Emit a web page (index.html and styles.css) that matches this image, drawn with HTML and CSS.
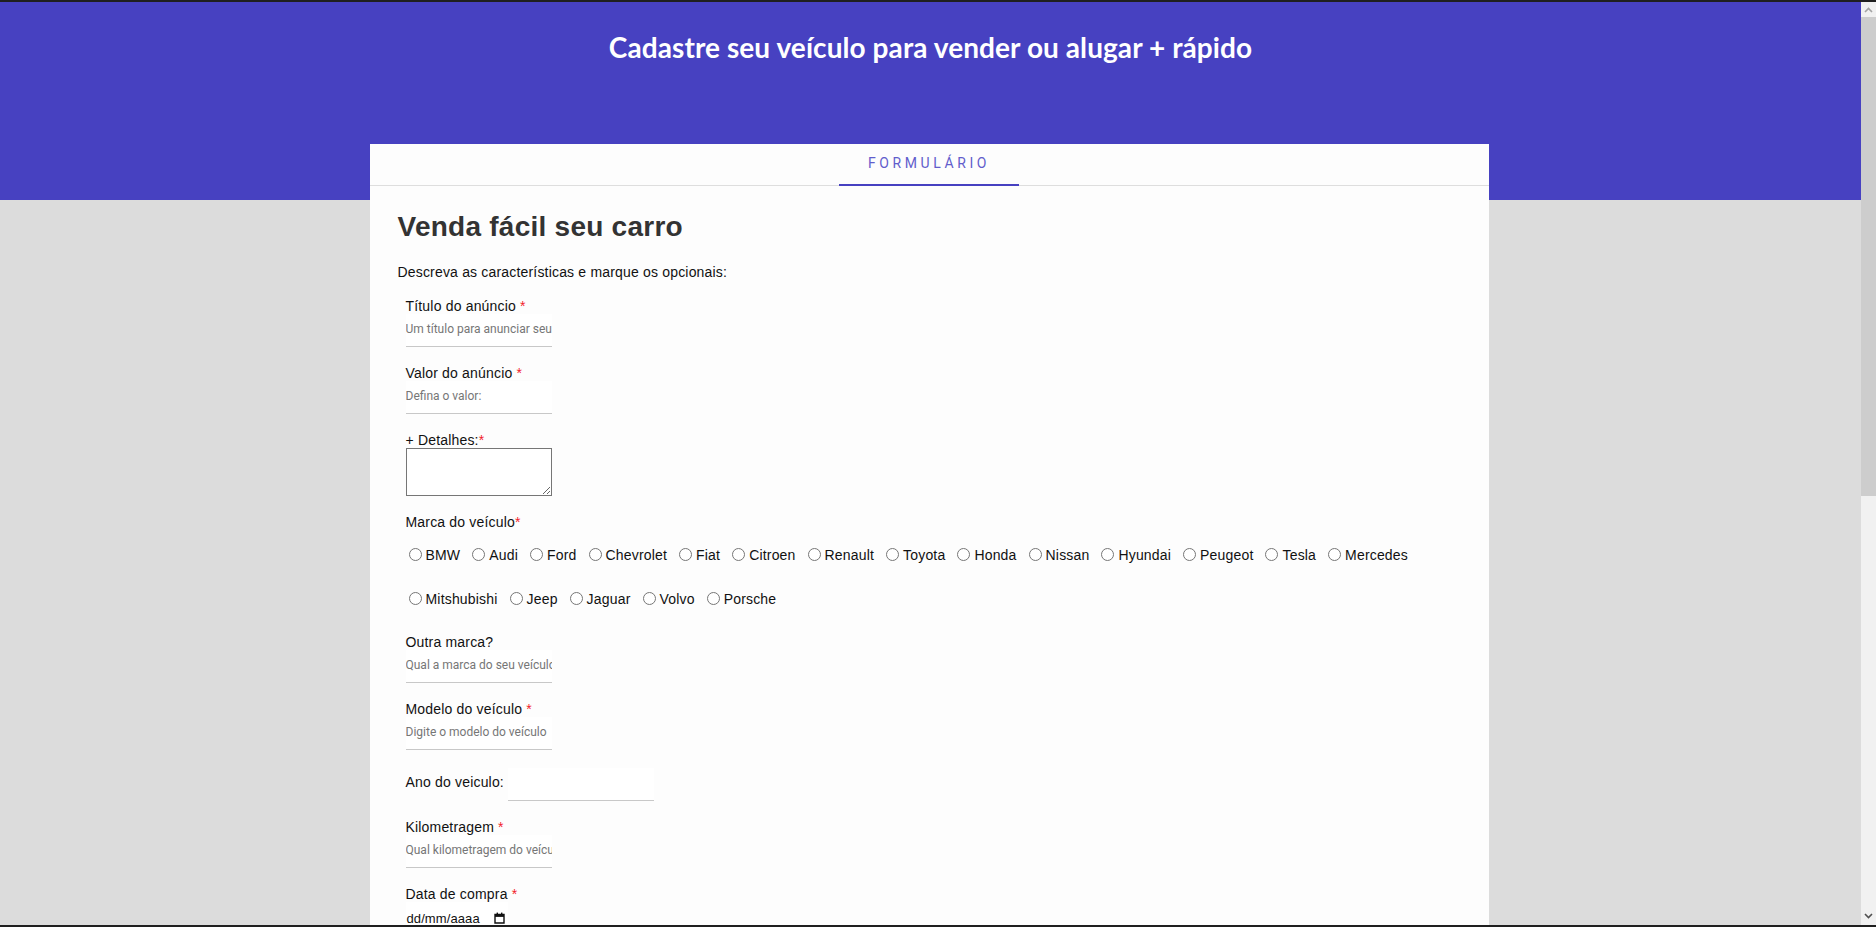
FILE: index.html
```html
<!DOCTYPE html>
<html lang="pt-BR">
<head>
<meta charset="utf-8">
<title>Cadastre seu veículo</title>
<link rel="stylesheet" href="styles.css">
</head>
<body>
<div class="frame-top"></div>
<div class="frame-bottom"></div>
<div class="scrollbar">
  <div class="sb-btn"><svg width="9" height="6" viewBox="0 0 9 6"><path d="M1 5 L4.5 1.5 L8 5" fill="none" stroke="#a3a3a3" stroke-width="1.6"/></svg></div>
  <div class="sb-thumb"></div>
  <div class="sb-track"></div>
  <div class="sb-btn sb-down"><svg width="9" height="6" viewBox="0 0 9 6"><path d="M1 1 L4.5 4.5 L8 1" fill="none" stroke="#505050" stroke-width="1.6"/></svg></div>
</div>

<div class="page">
  <header class="hero">
    <h1 class="hero-title">Cadastre seu veículo para vender ou alugar + rápido</h1>
  </header>

  <main class="card">
    <nav class="tabs"><a class="tab" href="#form">FORMULÁRIO</a></nav>

    <section class="content" id="form">
      <h2 class="form-title">Venda fácil seu carro</h2>
      <p class="intro">Descreva as características e marque os opcionais:</p>

      <form class="fields">
        <div class="field">
          <label class="label">Título do anúncio <span class="req">*</span></label>
          <input class="input" type="text" placeholder="Um título para anunciar seu veículo">
        </div>

        <div class="field">
          <label class="label">Valor do anúncio <span class="req">*</span></label>
          <input class="input" type="text" placeholder="Defina o valor:">
        </div>

        <div class="field">
          <label class="label">+ Detalhes:<span class="req">*</span></label>
          <textarea class="textarea"></textarea>
        </div>

        <div class="field field-wide">
          <label class="label">Marca do veículo<span class="req">*</span></label>
          <div class="radios">
            <label class="opt"><input type="radio" name="marca">BMW</label>
            <label class="opt"><input type="radio" name="marca">Audi</label>
            <label class="opt"><input type="radio" name="marca">Ford</label>
            <label class="opt"><input type="radio" name="marca">Chevrolet</label>
            <label class="opt"><input type="radio" name="marca">Fiat</label>
            <label class="opt"><input type="radio" name="marca">Citroen</label>
            <label class="opt"><input type="radio" name="marca">Renault</label>
            <label class="opt"><input type="radio" name="marca">Toyota</label>
            <label class="opt"><input type="radio" name="marca">Honda</label>
            <label class="opt"><input type="radio" name="marca">Nissan</label>
            <label class="opt"><input type="radio" name="marca">Hyundai</label>
            <label class="opt"><input type="radio" name="marca">Peugeot</label>
            <label class="opt"><input type="radio" name="marca">Tesla</label>
            <label class="opt"><input type="radio" name="marca">Mercedes</label>
            <label class="opt"><input type="radio" name="marca">Mitshubishi</label>
            <label class="opt"><input type="radio" name="marca">Jeep</label>
            <label class="opt"><input type="radio" name="marca">Jaguar</label>
            <label class="opt"><input type="radio" name="marca">Volvo</label>
            <label class="opt"><input type="radio" name="marca">Porsche</label>
          </div>
        </div>

        <div class="field">
          <label class="label">Outra marca?</label>
          <input class="input" type="text" placeholder="Qual a marca do seu veículo?">
        </div>

        <div class="field">
          <label class="label">Modelo do veículo <span class="req">*</span></label>
          <input class="input" type="text" placeholder="Digite o modelo do veículo">
        </div>

        <div class="field-inline">
          <label class="label">Ano do veiculo:</label>
          <input class="input" type="text">
        </div>

        <div class="field">
          <label class="label">Kilometragem <span class="req">*</span></label>
          <input class="input" type="text" placeholder="Qual kilometragem do veículo?">
        </div>

        <div class="field">
          <label class="label">Data de compra <span class="req">*</span></label>
          <div class="date">
            <span>dd/mm/aaaa</span>
            <svg class="cal" width="11" height="12" viewBox="0 0 11 12"><path d="M1 2.5 H10 V11 H1 Z" fill="none" stroke="#111" stroke-width="1.4"/><rect x="1" y="2.5" width="9" height="2.4" fill="#111"/><rect x="2.6" y="0.6" width="1.4" height="2.2" fill="#111"/><rect x="7" y="0.6" width="1.4" height="2.2" fill="#111"/></svg>
          </div>
        </div>

        <div class="field">
          <label class="label">Combustível <span class="req">*</span></label>
          <input class="input" type="text" placeholder="Gasolina, álcool, flex...">
        </div>

        <div class="field">
          <label class="label">Contato <span class="req">*</span></label>
          <input class="input" type="text" placeholder="Seu telefone">
        </div>
      </form>
    </section>
  </main>
</div>
</body>
</html>
```

FILE: styles.css
```css
html, body {
  margin: 0;
  padding: 0;
  overflow: hidden;
  background: #dcdcdc;
  font-family: "Liberation Sans", Arial, sans-serif;
  font-size: 14px;
  letter-spacing: 0.18px;
  color: #000;
}

.frame-top,
.frame-bottom {
  position: fixed;
  left: 0;
  right: 0;
  height: 2px;
  background: #1f1f1f;
  z-index: 20;
}
.frame-top { top: 0; }
.frame-bottom { bottom: 0; }

.scrollbar {
  position: fixed;
  top: 0;
  right: 0;
  width: 15px;
  height: 100%;
  background: #f1f1f1;
  display: flex;
  flex-direction: column;
  z-index: 10;
}
.sb-btn {
  height: 17px;
  padding-top: 2px;
  box-sizing: border-box;
  display: flex;
  align-items: center;
  justify-content: center;
}
.sb-down {
  padding-top: 0;
  padding-bottom: 4px;
  height: 19px;
}
.sb-thumb {
  height: 479px;
  background: #cdcdcd;
}
.sb-track { flex: 1; }

.page {
  margin-right: 15px;
}

.hero {
  height: 200px;
  box-sizing: border-box;
  padding-top: 30px;
  background: #4741c1;
  text-align: center;
}
.hero-title {
  margin: 0;
  font-family: Lato, "Open Sans", sans-serif;
  font-weight: 700;
  font-size: 28px;
  letter-spacing: 0.08px;
  line-height: normal;
  color: #fff;
}

.card {
  width: 1119px;
  margin: -56px 0 0 calc(50% - 561px);
  background: #fdfdfd;
  min-height: 1500px;
}

.tabs {
  display: flex;
  justify-content: center;
  align-items: flex-start;
  height: 41px;
  border-bottom: 1px solid #dedede;
}
.tab {
  flex-shrink: 0;
  box-sizing: border-box;
  width: 180px;
  height: 42px;
  line-height: 38px;
  border-bottom: 2px solid #4741c1;
  text-align: center;
  font-family: Roboto, sans-serif;
  font-size: 14px;
  font-weight: 400;
  letter-spacing: 3.6px;
  color: #625dcc;
  text-decoration: none;
}

.content {
  padding: 25px 25px 40px 28px;
}
.form-title {
  margin: 0;
  font-size: 28px;
  line-height: 32px;
  font-weight: 700;
  letter-spacing: 0.25px;
  color: #333;
}
.intro {
  margin: 21px 0 18px;
  line-height: 16px;
  color: #111;
}

.fields {
  padding-left: 8px;
  display: flex;
  flex-direction: column;
  align-items: flex-start;
  gap: 18px;
}
.field {
  display: flex;
  flex-direction: column;
  align-items: flex-start;
}
.field-wide {
  align-self: stretch;
}
.field-inline {
  display: flex;
  align-items: baseline;
  gap: 4px;
}
.label {
  line-height: 16px;
  color: #111;
}
.req {
  color: #f21d2b;
}

.input {
  box-sizing: border-box;
  width: 146px;
  height: 33px;
  margin: 0;
  padding: 0 0 2px;
  border: 0;
  border-bottom: 1px solid #c8c8c8;
  background: #fff;
  font-family: Roboto, sans-serif;
  font-size: 12px;
  letter-spacing: 0;
  color: #333;
  outline: none;
}
.input::placeholder {
  color: #767676;
}

.textarea {
  box-sizing: border-box;
  width: 146px;
  height: 48px;
  margin: 0;
  padding: 2px;
  border: 1px solid #767676;
  background: #fff;
  font-family: "Liberation Mono", monospace;
  font-size: 13px;
}

.radios {
  display: flex;
  flex-wrap: wrap;
  column-gap: 12px;
  row-gap: 9px;
  padding: 7px 0 0 3px;
}
.opt {
  display: inline-flex;
  align-items: center;
  gap: 4px;
  height: 35px;
  color: #111;
}
.opt input {
  margin: 0;
  width: 13px;
  height: 13px;
}

.date {
  box-sizing: border-box;
  width: 102px;
  height: 33px;
  padding: 0 3px 0 1px;
  display: flex;
  align-items: center;
  justify-content: space-between;
  background: #fff;
  border-bottom: 1px solid #c8c8c8;
  font-size: 13px;
  letter-spacing: 0.1px;
  color: #111;
}
.cal {
  display: block;
}
```
